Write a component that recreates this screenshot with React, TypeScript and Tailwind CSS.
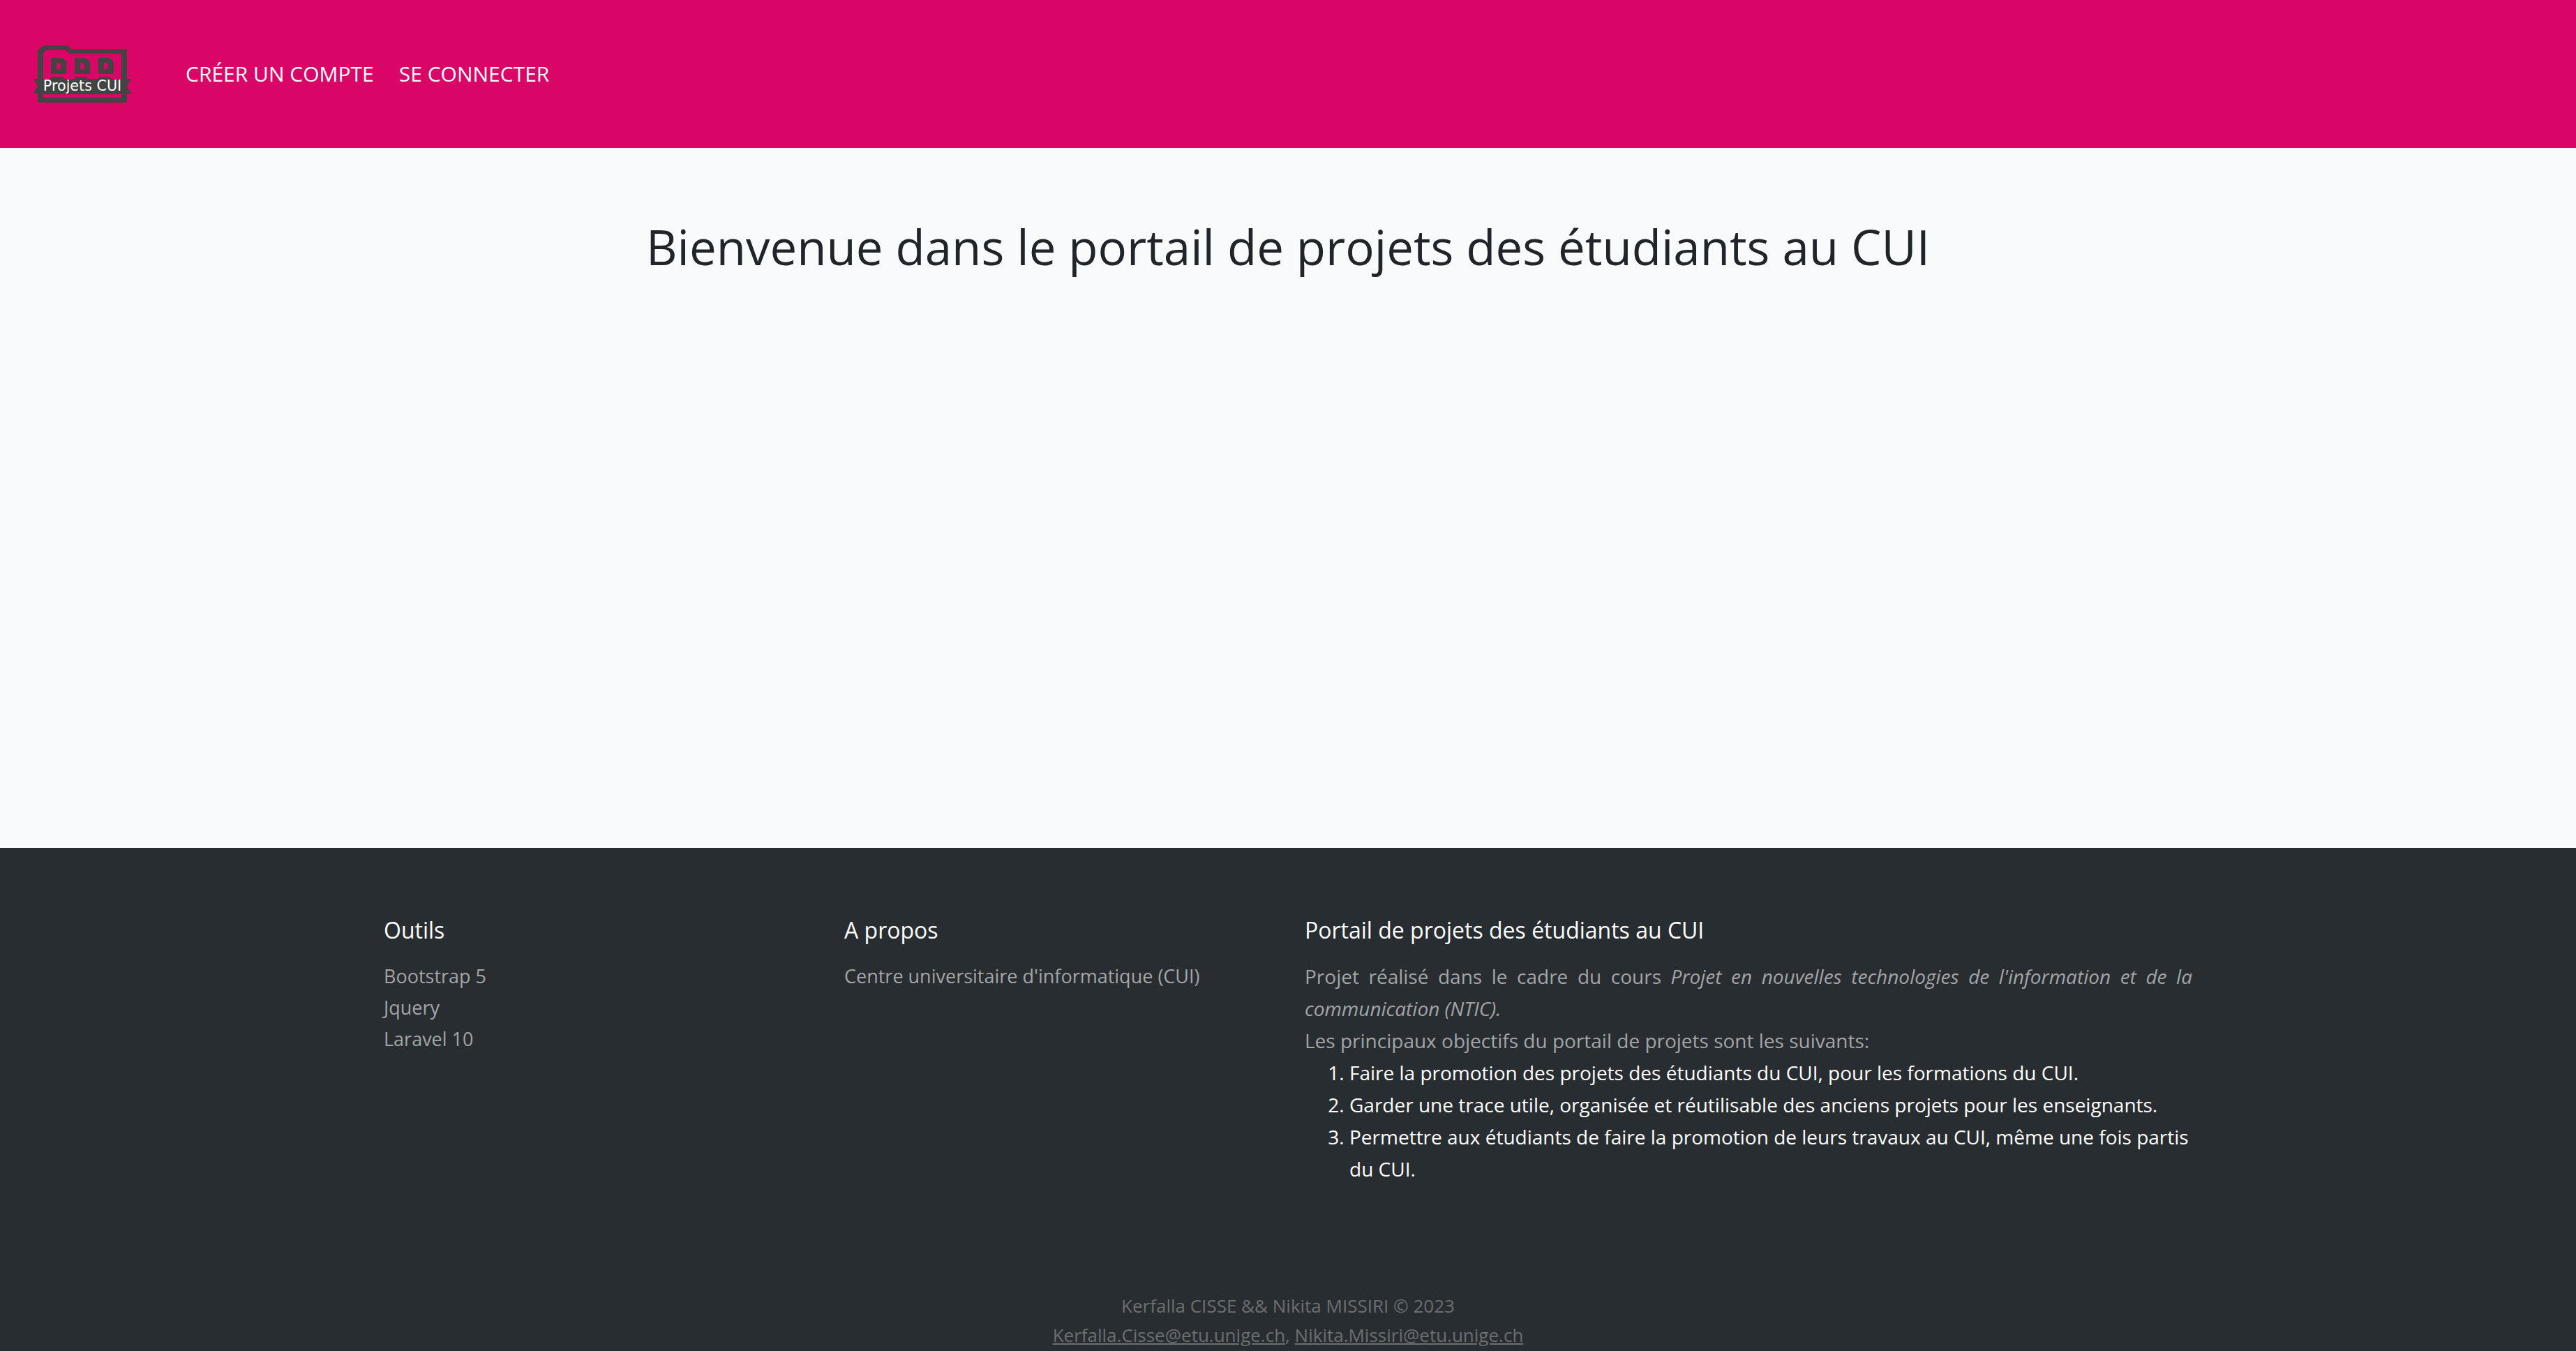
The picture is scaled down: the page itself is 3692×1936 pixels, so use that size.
function Logo() {
  return (
    <svg viewBox="78 102 432 252" className="h-[84px] w-[144px]" role="img" aria-label="Projets CUI">
      <g fill="#434343">
        <path
          fillRule="evenodd"
          d="M102 127 L127 106 H231 L247 121 H486 V351 H102 Z M126 137 V330 H462 V141 H238 L222 125 H139 Z"
        />
        <path fillRule="evenodd" d="M159 159 H207 L226 174 V228 H159 Z M183 180 V208 H201 V187 L195 180 Z" />
        <path fillRule="evenodd" d="M261 159 H308 L327 174 V228 H261 Z M285 180 V208 H302 V187 L296 180 Z" />
        <path fillRule="evenodd" d="M362 159 H410 L429 174 V228 H362 Z M386 180 V208 H404 V187 L398 180 Z" />
        <path d="M159 249 V243 L164 240 H207 L214 244 V249 Z" />
        <path d="M261 249 V243 L266 240 H308 L315 244 V249 Z" />
        <path d="M362 249 V243 L367 240 H410 L417 244 V249 Z" />
        <path d="M82 249 H506 L485 281 L506 313 H82 L103 281 Z" />
        <path d="M126 249 H462 V315 H126 Z" />
      </g>
      <text x="294" y="299" textAnchor="middle" fill="#ffffff" fontSize="62" fontFamily="DejaVu Sans, sans-serif">
        Projets CUI
      </text>
    </svg>
  );
}

const objectives = [
  "Faire la promotion des projets des étudiants du CUI, pour les formations du CUI.",
  "Garder une trace utile, organisée et réutilisable des anciens projets pour les enseignants.",
  "Permettre aux étudiants de faire la promotion de leurs travaux au CUI, même une fois partis du CUI.",
];

function FooterTitle({ children }: { children: string }) {
  return <h2 className="mb-6 text-[32px] leading-[38px] font-medium text-white">{children}</h2>;
}

function FooterLinks({ items }: { items: string[] }) {
  return (
    <ul className="text-[27px] leading-[45px] text-[#a2a5a7]">
      {items.map((item) => (
        <li key={item}>
          <a href="#">{item}</a>
        </li>
      ))}
    </ul>
  );
}

export default function App() {
  return (
    <div className="flex min-h-screen flex-col bg-[#f8fafc] font-['Open_Sans',sans-serif] text-[#212529]">
      <header className="flex items-center gap-[76px] bg-[#d90668] px-[46px] py-16">
        <a href="#">
          <Logo />
        </a>
        <nav className="flex gap-9 text-[30px] leading-[46px] font-medium text-white">
          <a href="#">CRÉER UN COMPTE</a>
          <a href="#">SE CONNECTER</a>
        </nav>
      </header>

      <main className="flex-1 px-6 pt-[98px]">
        <h1 className="text-center text-[69px] leading-[86px]">
          Bienvenue dans le portail de projets des étudiants au CUI
        </h1>
      </main>

      <footer className="bg-[#282d31] pt-[99px]">
        <div className="mx-auto grid max-w-[2640px] grid-cols-4 gap-12 px-6">
          <section>
            <FooterTitle>Outils</FooterTitle>
            <FooterLinks items={["Bootstrap 5", "Jquery", "Laravel 10"]} />
          </section>
          <section>
            <FooterTitle>A propos</FooterTitle>
            <FooterLinks items={["Centre universitaire d'informatique (CUI)"]} />
          </section>
          <section className="col-span-2 text-[28px] leading-[46px]">
            <FooterTitle>Portail de projets des étudiants au CUI</FooterTitle>
            <p className="text-justify text-[#a2a5a7]">
              Projet réalisé dans le cadre du cours{" "}
              <em>Projet en nouvelles technologies de l'information et de la communication (NTIC).</em>
            </p>
            <p className="text-[#a2a5a7]">Les principaux objectifs du portail de projets sont les suivants:</p>
            <ol className="list-decimal pl-16 text-white">
              {objectives.map((objective) => (
                <li key={objective}>{objective}</li>
              ))}
            </ol>
          </section>
        </div>
        <div className="pt-[152px] pb-0.5 text-center text-[26px] leading-[42px] text-[#6b6f72]">
          <p>Kerfalla CISSE &amp;&amp; Nikita MISSIRI © 2023</p>
          <p>
            <a href="mailto:Kerfalla.Cisse@etu.unige.ch" className="underline">
              Kerfalla.Cisse@etu.unige.ch
            </a>
            ,{" "}
            <a href="mailto:Nikita.Missiri@etu.unige.ch" className="underline">
              Nikita.Missiri@etu.unige.ch
            </a>
          </p>
        </div>
      </footer>
    </div>
  );
}
